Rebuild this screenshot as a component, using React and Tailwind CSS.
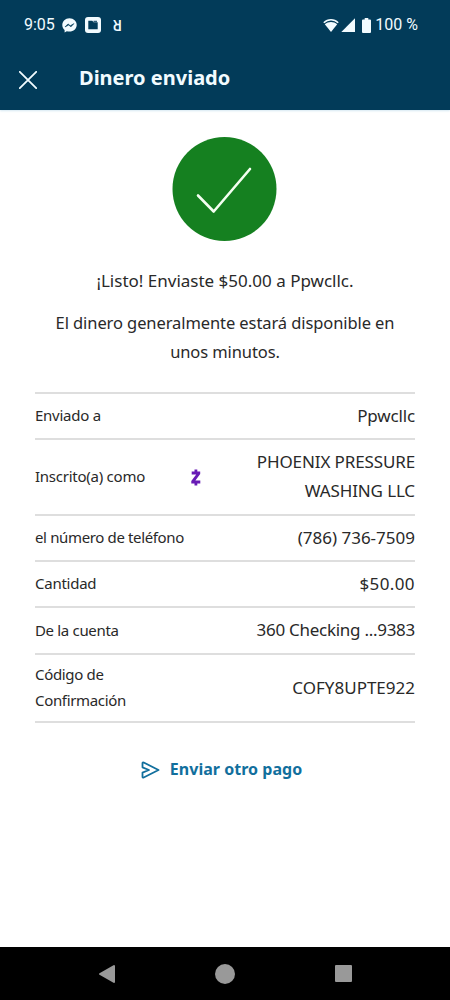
const details = [
  { label: 'Enviado a', value: 'Ppwcllc', height: 'h-[46px]', labelClass: 'tracking-[-0.25px]', valueClass: 'tracking-[-0.15px]' },
  { label: 'Inscrito(a) como', value: 'PHOENIX PRESSURE WASHING LLC', height: 'h-[76px]', zelle: true, labelClass: 'tracking-[-0.25px]', valueClass: 'w-[175px] tracking-[-0.12px]' },
  { label: 'el número de teléfono', value: '(786) 736-7509', height: 'h-[46px]', labelClass: 'tracking-[-0.36px]', valueClass: 'tracking-[0px]' },
  { label: 'Cantidad', value: '$50.00', height: 'h-[46px]', labelClass: 'tracking-[-0.25px]', valueClass: 'tracking-[0.4px]' },
  { label: 'De la cuenta', value: '360 Checking ...9383', height: 'h-[47px]', labelClass: 'tracking-[-0.33px]', valueClass: 'tracking-[-0.28px]' },
  { label: 'Código de Confirmación', value: 'COFY8UPTE922', height: 'h-[68px]', labelClass: 'w-[110px] tracking-[-0.33px]', valueClass: 'tracking-[0px]' },
];

const StatusBar = () => (
  <div className="flex h-[50px] items-center pl-6 pr-8">
    <span className="w-[38px] font-['Roboto',sans-serif] text-[16px]">9:05</span>
    <svg className="h-[15px] w-[15px]" viewBox="0 0 15 15">
      <path d="M7.5 .3C3.3.3.3 3.3.3 7.1c0 2 .8 3.8 2.3 5v2.3l2.2-1.2c.9.2 1.8.4 2.7.4 4.1 0 7.2-2.9 7.2-6.6S11.6.3 7.5.3z" fill="#f2fbff" />
      <path d="M3 8.900l3-3 2.300 1.900L11.900 5.600 9 8.800 6.700 7z" fill="#023b59" stroke="#023b59" strokeWidth=".6" strokeLinejoin="round" />
    </svg>
    <svg className="ml-2 h-4 w-4" viewBox="0 0 16 16">
      <rect width="16" height="16" rx="3" fill="#f2fbff" />
      <path d="M3.300 3.800h4l1.300 1.500h4.100v6.900H3.300z" fill="#023b59" />
      <path d="M8.500 4.300h3.500" stroke="#023b59" />
    </svg>
    <span className="ml-3 rotate-180 font-['Roboto',sans-serif] text-[14px] font-medium leading-none">R</span>
    <div className="ml-auto flex items-center">
      <svg className="h-[15px] w-4" viewBox="0 0 16 15">
        <path d="M.8 4.700C5 .6 11 .6 15.200 4.700" fill="none" stroke="#f2fbff" strokeWidth="1.500" />
        <path d="M1.800 6.200c3.700-3 8.700-3 12.400 0L8 14z" fill="#f2fbff" />
      </svg>
      <svg className="ml-[2px] h-[14px] w-[14px]" viewBox="0 0 14 14">
        <path d="M14 .3V14H.3z" fill="#f2fbff" />
      </svg>
      <svg className="ml-[7px] h-[15px] w-[9px]" viewBox="0 0 9 15">
        <path d="M2.700 0h3.600v1.500H8q1 0 1 1V14q0 1-1 1H1q-1 0-1-1V2.500q0-1 1-1h1.700z" fill="#f2fbff" />
      </svg>
      <span className="ml-1 font-['Roboto',sans-serif] text-[16px]">100 %</span>
    </div>
  </div>
);

const Zelle = () => (
  <svg className="absolute left-[156px] top-[29px] h-[17px] w-[10px]" viewBox="0 0 10 17">
    <path d="M3.500.5h2.800v2h2.900V5L4.400 11.500h4.900v3h-3v2H3.500v-2H.3V12l4.900-6.600H.7v-2.900h2.800z" fill="#681bb5" />
  </svg>
);

const DetailRow = ({ row }) => (
  <div className={`relative flex items-center justify-between border-b-2 border-[#dedede] pb-[2px] ${row.height}`}>
    <span className={`text-[15px] leading-[26px] ${row.labelClass}`}>{row.label}</span>
    {row.zelle && <Zelle />}
    <span className={`text-right text-[17px] leading-[29px] ${row.valueClass}`}>{row.value}</span>
  </div>
);

const App = () => {
  return (
    <div className="flex h-[1000px] w-[450px] flex-col bg-white font-['Noto_Sans','Open_Sans',sans-serif] text-[#292929]">
      <header className="h-[110px] bg-[#023b59] text-[#f2fbff] shadow-[0_1px_2px_#d5e8f2]">
        <StatusBar />
        <div className="flex h-[60px] items-center pl-[19px]">
          <svg className="h-[18px] w-[18px]" viewBox="0 0 18 18">
            <path d="M.8.800l16.400 16.400M17.200.800L.8 17.200" stroke="#f2fbff" strokeWidth="1.800" strokeLinecap="round" />
          </svg>
          <h1 className="mb-1 ml-[42px] text-[20px] font-bold leading-7">Dinero enviado</h1>
        </div>
      </header>

      <main className="flex flex-1 flex-col px-[35px] pt-[26px]">
        <svg className="mx-auto h-[106px] w-[106px]" viewBox="0 0 106 106">
          <circle cx="52.500" cy="53" r="52" fill="#158020" />
          <path d="M26 59.500l15.700 16L78 33" fill="none" stroke="#f4fff1" strokeWidth="2.600" strokeLinecap="round" strokeLinejoin="round" />
        </svg>
        <div className="mt-6 text-center text-[17px] leading-[29px]">
          <p>¡Listo! Enviaste $50.00 a Ppwcllc.</p>
          <p className="mt-[13px] text-[16.5px] tracking-[-0.09px]">El dinero generalmente estará disponible en<br />unos minutos.</p>
        </div>
        <div className="mt-[26px] border-t-2 border-[#dedede]">
          {details.map((row) => (
            <DetailRow key={row.label} row={row} />
          ))}
        </div>
        <button className="mr-[7px] mt-8 flex items-center self-center text-[16px] font-bold leading-7 tracking-[0.03px] text-[#116f9d]">
          <svg className="mr-[10px] mt-[2px] h-[18px] w-[19px]" viewBox="0 0 19 18">
            <path d="M1.500 2.200q0-1.200 1.200-.7L17.500 9 2.700 16.500q-1.200.5-1.200-.7V11.700L8 9 1.500 6.300z" fill="none" stroke="currentColor" strokeWidth="1.800" strokeLinejoin="round" />
          </svg>
          Enviar otro pago
        </button>
      </main>

      <nav className="flex h-[53px] items-center justify-between bg-black px-[98px]">
        <svg className="h-5 w-[18px]" viewBox="0 0 18 20">
          <path d="M16 2v16L2 10z" fill="#999" stroke="#999" strokeWidth="2" strokeLinejoin="round" />
        </svg>
        <span className="mr-px h-5 w-5 rounded-full bg-[#999]" />
        <span className="h-[17px] w-[17px] rounded-[1px] bg-[#999]" />
      </nav>
    </div>
  );
};

export default App;
